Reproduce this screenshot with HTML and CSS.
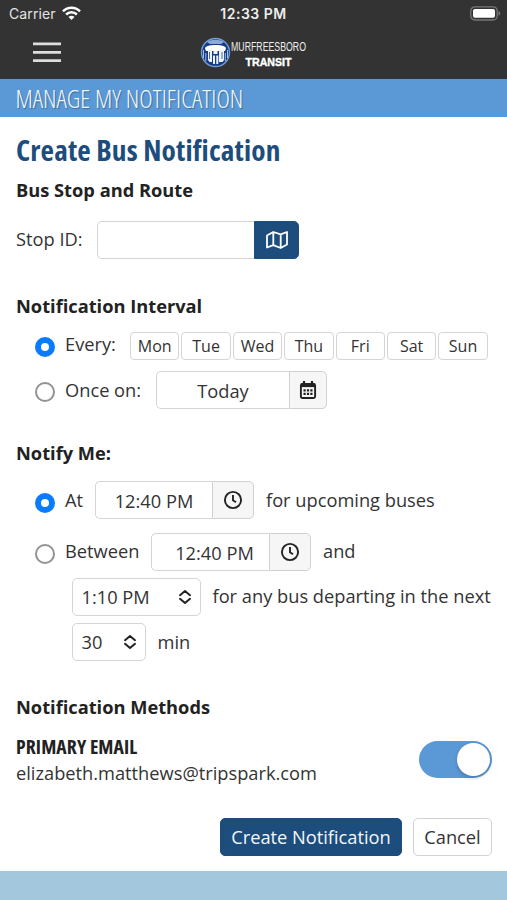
FILE: index.html
```html
<!DOCTYPE html>
<html lang="en">
<head>
<meta charset="utf-8">
<title>Manage My Notification</title>
<link rel="stylesheet" href="styles.css">
</head>
<body>
<svg width="0" height="0" class="defs" aria-hidden="true">
  <symbol id="clock" viewBox="0 0 20 20"><circle cx="10" cy="10" r="8.1" fill="none" stroke="currentColor" stroke-width="1.9"/><path d="M10 5v5.2l3 2" fill="none" stroke="currentColor" stroke-width="1.9"/></symbol>
  <symbol id="updown" viewBox="0 0 14 16"><path d="M2 6.2 7 2l5 4.2M2 9.8 7 14l5-4.2" fill="none" stroke="currentColor" stroke-width="2" stroke-linecap="round" stroke-linejoin="round"/></symbol>
</svg>
<header class="top">
  <div class="status">
    <span class="carrier">Carrier
      <svg width="19" height="15" viewBox="0 0 19 15" fill="none" stroke="#fff" stroke-width="2.5"><path d="M1 5.3a12.1 12.1 0 0 1 17 0M4.1 8.5a7.7 7.7 0 0 1 10.8 0"/><path d="M6.5 11a4.2 4.2 0 0 1 6 0L9.5 14z" fill="#fff" stroke="none"/></svg>
    </span>
    <span class="time">12:33 PM</span>
    <svg class="battery" width="31" height="15" viewBox="0 0 31 15"><rect x=".8" y=".8" width="26.4" height="13.2" rx="4" fill="none" stroke="#777" stroke-width="1.3"/><rect x="3" y="3" width="22" height="8.8" rx="1.8" fill="#fff"/><path d="M28.5 5c2.4 1 2.4 3.8 0 4.8z" fill="#777"/></svg>
  </div>
  <div class="nav">
    <svg class="menu" width="28" height="21" viewBox="0 0 28 21"><path d="M0 1.900h28M0 10.300h28M0 18.700h28" stroke="#ddd" stroke-width="2.700"/></svg>
    <div class="logo">
      <svg width="31" height="31" viewBox="0 0 31 31"><circle cx="15.5" cy="15.5" r="14" fill="#173b86" stroke="#719fd2" stroke-width="1.4"/><path d="M7 5c5-3 12-3 17 0l-3 2H10z" fill="#8ba9db"/><path d="M5 11.500c0-2 4-3.500 10.500-3.500S26 9.500 26 11.500l-1 2.500H6z" fill="#fff"/><path d="M8 13h4v12H9.500L8 23zM19 13h5v10l-1.500 2H19zM13.500 14h4v3h-4zM13 18.500h2V27h-2zM16.300 18.500h2V27h-2z" fill="#edf3fc"/><path d="M9.500 15v7M22 15v7" stroke="#4269ae" stroke-width="1"/><path d="M3.500 13v8M5.800 16v8M27.500 13v8M25.300 16v8" stroke="#a4bde2" stroke-width="1"/></svg>
      <svg class="wordmark" width="80" height="31" viewBox="0 0 80 31"><text x="0" y="14" class="wm1" textLength="75" lengthAdjust="spacingAndGlyphs">MURFREESBORO</text><text x="14.500" y="28.500" class="wm2" textLength="46" lengthAdjust="spacingAndGlyphs">TRANSIT</text></svg>
    </div>
  </div>
</header>
<div class="banner"><span>MANAGE MY NOTIFICATION</span></div>
<main>
  <h1>Create Bus Notification</h1>
  <h2 class="h-stop">Bus Stop and Route</h2>
  <div class="row stop">
    <label>Stop ID:</label>
    <div class="group"><div class="field stop-field"></div><div class="addon map"><svg width="22" height="18" viewBox="0 0 22 18" fill="none" stroke="#fff" stroke-width="1.8" stroke-linejoin="round"><path d="M1 4.500 7.300 1l7.400 2.300L21 1v12.500L14.700 17l-7.400-2.800L1 16.500zM7.300 1v13.200M14.700 3.300V17"/></svg></div></div>
  </div>
  <h2 class="h-int">Notification Interval</h2>
  <div class="row every"><i class="radio on"></i><label>Every:</label>
    <div class="days"><span>Mon</span><span>Tue</span><span>Wed</span><span>Thu</span><span>Fri</span><span>Sat</span><span>Sun</span></div>
  </div>
  <div class="row once"><i class="radio"></i><label>Once on:</label>
    <div class="group"><div class="field date">Today</div><div class="addon cal"><svg width="18" height="20" viewBox="0 0 18 20"><path d="M5 1v4M13 1v4" stroke="#222" stroke-width="2.200"/><rect x="1.900" y="4" width="14.200" height="14" rx="1.500" fill="none" stroke="#222" stroke-width="1.900"/><path d="M2 3.500h14v3.600H2z" fill="#222"/><path d="M4.500 10.300h9M4.500 13.900h9" stroke="#222" stroke-width="2.200" stroke-dasharray="2.200 1.200"/></svg></div></div>
  </div>
  <h2 class="h-me">Notify Me:</h2>
  <div class="row at"><i class="radio on"></i><label>At</label>
    <div class="group"><div class="field t1">12:40 PM</div><div class="addon"><svg width="20" height="20"><use href="#clock"/></svg></div></div>
    <span class="after">for upcoming buses</span>
  </div>
  <div class="row between"><i class="radio"></i><label>Between</label>
    <div class="group"><div class="field t2">12:40 PM</div><div class="addon"><svg width="20" height="20"><use href="#clock"/></svg></div></div>
    <span class="after">and</span>
  </div>
  <div class="row sub"><div class="select s1">1:10 PM<svg width="14" height="16"><use href="#updown"/></svg></div><span class="after">for any bus departing in the next</span></div>
  <div class="row sub last"><div class="select s2">30<svg width="14" height="16"><use href="#updown"/></svg></div><span class="after">min</span></div>
  <h2 class="h-meth">Notification Methods</h2>
  <div class="method">
    <div><h3>PRIMARY EMAIL</h3><p>elizabeth.matthews@tripspark.com</p></div>
    <div class="toggle"><i></i></div>
  </div>
  <div class="actions"><button class="primary">Create Notification</button><button>Cancel</button></div>
</main>
<footer></footer>
</body>
</html>
```

FILE: styles.css
```css
* { box-sizing: border-box; }
body { margin: 0; height: 900px; overflow: hidden; display: flex; flex-direction: column; background: #fff; color: #333; font: 18.25px/26px "Open Sans", "Noto Sans", sans-serif; white-space: nowrap; }
.defs { position: absolute; }
svg { display: block; flex: none; }
h1, h2, h3, p { margin: 0; }
.top { height: 79px; background: #333; border-bottom: 1px solid #2d3942; flex: none; }
.status { height: 27px; display: grid; grid-template-columns: 1fr auto 1fr; align-items: center; padding: 0 6px 0 9px; font: 14px/26px Inter, sans-serif; color: #e3e3e3; }
.carrier { display: flex; gap: 6px; align-items: center; letter-spacing: .1px; }
.time { font-weight: 600; color: #eee; letter-spacing: .5px; margin-left: -3px; }
.battery { justify-self: end; }
.nav { height: 51px; display: grid; grid-template-columns: 167px 1fr; padding-left: 33px; align-items: center; }
.logo { display: flex; }
.wordmark { overflow: visible; }
.wm1 { font: 12.5px "Liberation Sans", sans-serif; fill: #eee; }
.wm2 { font: bold 11px "Liberation Sans", sans-serif; fill: #fff; stroke: #fff; stroke-width: .4px; }
.banner { height: 38px; flex: none; background: #5b99d6; padding-left: 15.5px; color: #f3f7fb; font-size: 25.5px; line-height: 38px; font-weight: 300; font-stretch: 75%; text-shadow: 1px 1px 1px #376b9b; }
main { height: 754px; padding: 0 15px 0 16px; }
h1 { height: 41px; margin-top: 13px; font-size: 29.3px; line-height: 41px; font-weight: 700; font-stretch: 75%; letter-spacing: .15px; color: #1c4d7c; }
h2 { height: 26px; font-size: 18.25px; line-height: 25px; font-weight: 700; color: #222; }
.h-stop { margin-top: 6px; }
.row { display: flex; align-items: center; height: 38px; }
.row label { flex: none; }
.group { display: flex; height: 38px; }
.field { border: 1.5px solid #d5d5d5; border-right: 0; border-radius: 5px 0 0 5px; line-height: 37px; text-align: center; }
.addon { width: 42px; border: 1.5px solid #d0d0d0; border-radius: 0 5px 5px 0; background: #f6f6f6; display: grid; place-items: center; color: #222; }
.stop { margin-top: 18px; }
.stop label { width: 81px; margin-top: -3px; }
.stop-field { width: 157px; }
.map { width: 45px; background: #1c4d7c; border-color: #1c4d7c; }
.h-int { margin-top: 34px; }
.radio { width: 20px; height: 20px; margin: 4px 10px 0 19px; flex: none; border: 2px solid #929292; border-radius: 50%; }
.radio.on { border: 6px solid #087bff; }
.every { height: 28px; margin-top: 13px; }
.every .radio { margin-top: 2px; }
.every label { width: 65px; margin-top: -5px; }
.days { display: flex; gap: 2px; }
.days span { width: 49.4px; height: 28px; border: 1.5px solid #d5d5d5; border-radius: 4px; text-align: center; font-size: 16px; line-height: 26px; }
.once { margin-top: 11px; }
.once label { width: 91px; }
.date { width: 133px; }
.cal { width: 38px; }
.h-me { margin-top: 31px; }
.at { margin-top: 15px; }
.at .radio { margin-top: 6px; }
.at label { width: 30px; }
.t1 { width: 117px; }
.t2 { width: 118px; padding-left: 8px; }
.after { margin-left: 12px; }
.between { margin-top: 14px; }
.between label { width: 86px; }
.between label, .between .after { margin-top: -2px; }
.sub { padding-left: 55.5px; margin-top: 7px; }
.sub .after { margin-top: -2px; }
.last .after { margin-top: 0; }
.select { height: 38px; border: 1.5px solid #d5d5d5; border-radius: 5px; display: flex; justify-content: space-between; align-items: center; padding: 0 8px 0 9px; color: #333; }
.select svg { color: #222; }
.s1 { width: 129px; }
.s2 { width: 74px; }
.h-meth { margin-top: 33px; }
.method { height: 52px; margin-top: 15px; display: flex; justify-content: space-between; align-items: center; }
.method > div:first-child { margin-top: -3px; }
h3 { font-size: 19.6px; line-height: 26px; font-weight: 700; font-stretch: 75%; letter-spacing: .1px; color: #222; }
.toggle { width: 73px; height: 37px; border-radius: 19px; background: #5b99d6; padding: 2px; display: flex; justify-content: flex-end; margin-bottom: 4px; }
.toggle i { width: 33px; height: 33px; border-radius: 50%; background: #fff; box-shadow: 0 2px 4px #0003; }
.actions { display: flex; justify-content: flex-end; gap: 11px; margin-top: 31px; }
button { height: 38px; width: 79px; padding: 0; border: 1.5px solid #d2d2d2; border-radius: 5px; background: #fff; color: #333; font: inherit; }
.primary { width: 182px; background: #1c4d7c; border-color: #1c4d7c; color: #f4f7fa; }
footer { height: 29px; background: #a3c8dd; flex: none; }
```
